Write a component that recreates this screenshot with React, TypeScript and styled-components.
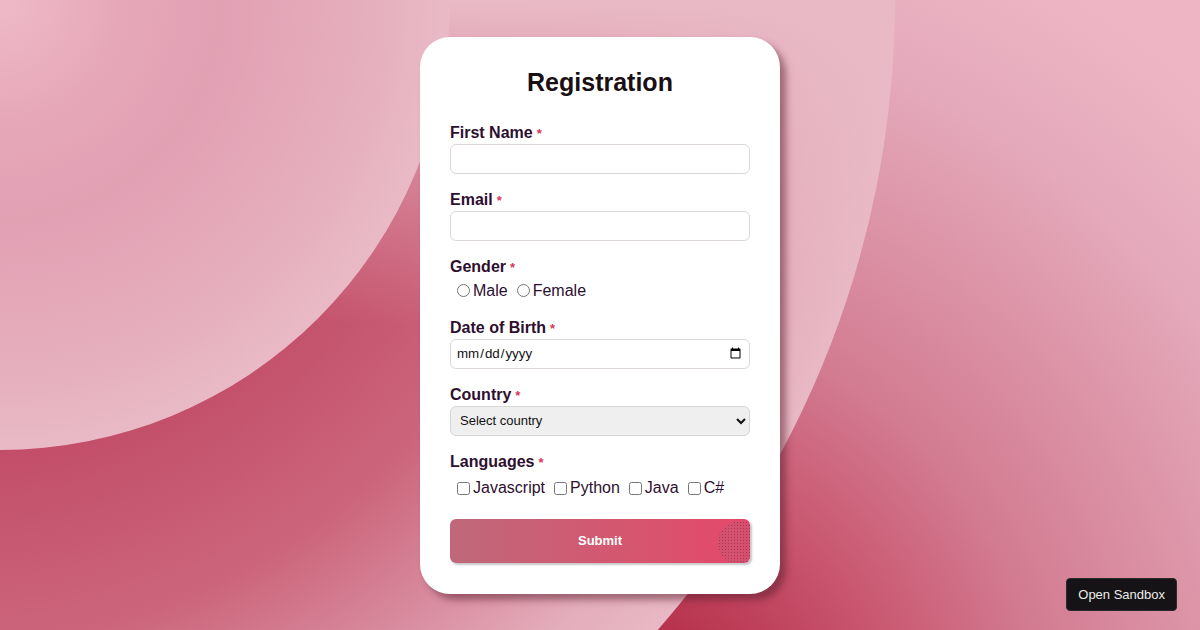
import React from "react";
import styled, { createGlobalStyle } from "styled-components";

const GlobalStyle = createGlobalStyle`
  body {
    margin: 0;
    font-family: "Liberation Sans", Arial, sans-serif;
  }
`;

// background: two rings spreading from the top left corner
const Page = styled.div`
  position: relative;
  width: 100%;
  height: 100vh;
  overflow: hidden;
  display: flex;
  align-items: center;
  justify-content: center;
  background: radial-gradient(
    circle at 600px 760px,
    #a82a45 0,
    #b8344e 150px,
    #c9566f 300px,
    #d27b91 450px,
    #dc93a6 600px,
    #e4aabb 750px,
    #eeb6c5 900px
  );

  &::before {
    content: "";
    position: absolute;
    left: -1015px;
    top: -955px;
    width: 1910px;
    height: 1910px;
    border-radius: 50%;
    background:
      linear-gradient(
        to bottom,
        rgba(233, 186, 198, 1) 955px,
        rgba(233, 186, 198, 0.6) 1080px,
        rgba(233, 186, 198, 0) 1280px
      ),
      radial-gradient(
        circle at 955px 955px,
        #c24d68 450px,
        #cc667c 650px,
        #d98da0 780px,
        #e4adbb 880px,
        #e8b8c4 955px
      );
  }

  &::after {
    content: "";
    position: absolute;
    left: -450px;
    top: -450px;
    width: 900px;
    height: 900px;
    border-radius: 50%;
    background: radial-gradient(
      circle at 450px 450px,
      #efbac7 0,
      #e6a8b9 120px,
      #e2a0b3 220px,
      #e6b0be 380px,
      #e9bac6 450px
    );
  }
`;

const Card = styled.form`
  position: relative;
  z-index: 1;
  width: 360px;
  box-sizing: border-box;
  padding: 30px 30px 31px;
  background: #ffffff;
  border-radius: 30px;
  box-shadow: 6px 6px 7px rgba(90, 30, 45, 0.5);
`;

const Title = styled.h2`
  margin: 0 0 27px;
  font-size: 25px;
  line-height: 30px;
  font-weight: 700;
  text-align: center;
  color: #1a1014;
`;

const Field = styled.div`
  display: flex;
  flex-direction: column;
  margin-bottom: 17px;
`;

const Label = styled.label`
  display: block;
  height: 18px;
  font-size: 16px;
  line-height: 18px;
  font-weight: 700;
  color: #2e0f30;
  margin-bottom: 2px;
`;

const Required = styled.span`
  color: #d6395c;
  font-size: 13px;
  line-height: 1;
  margin-left: 4px;
`;

const TextInput = styled.input`
  height: 30px;
  width: 100%;
  box-sizing: border-box;
  margin: 0;
  padding: 0 5px;
  border: 1px solid #dcd6da;
  border-radius: 6px;
  background: #fff;
  font-family: "Liberation Sans", Arial, sans-serif;
  font-size: 13.33px;
  color: #111;
`;

const Select = styled.select`
  height: 30px;
  width: 100%;
  box-sizing: border-box;
  margin: 0;
  padding: 0 5px;
  border: 1px solid #d6d6d6;
  border-radius: 6px;
  background-color: #efefef;
  font-family: "Liberation Sans", Arial, sans-serif;
  font-size: 13px;
  color: #111;
`;

const OptionRow = styled.div<{ $height: number }>`
  display: flex;
  align-items: center;
  gap: 9px;
  height: ${(p) => p.$height}px;
  margin-top: 2px;
  padding-left: 7px;
`;

const Option = styled.label`
  display: inline-flex;
  align-items: center;
  gap: 3px;
  font-size: 16px;
  color: #2e0f30;
`;

const Choice = styled.input`
  margin: 0;
  width: 13px;
  height: 13px;
`;

const SubmitButton = styled.button`
  position: relative;
  overflow: hidden;
  width: 100%;
  height: 44px;
  border: none;
  border-radius: 6px;
  background: linear-gradient(to right, #bf687a, #d5566f 60%, #e5486a);
  box-shadow: 2px 2px 2px rgba(0, 0, 0, 0.22);
  color: #ffffff;
  font-family: "Liberation Sans", Arial, sans-serif;
  font-size: 13px;
  font-weight: 700;
  cursor: pointer;

  &::after {
    content: "";
    position: absolute;
    top: 2px;
    right: -12px;
    width: 44px;
    height: 44px;
    border-radius: 50%;
    background-color: rgba(185, 95, 120, 0.35);
    background-image: radial-gradient(
      circle,
      rgba(120, 30, 60, 0.5) 0.6px,
      transparent 1px
    );
    background-size: 3px 3px;
  }
`;

const SandboxLink = styled.a`
  position: fixed;
  right: 23px;
  bottom: 19px;
  z-index: 2;
  display: flex;
  align-items: center;
  height: 33px;
  padding: 0 11px;
  box-sizing: border-box;
  background: #151315;
  border: 1px solid #2a2a2a;
  border-radius: 4px;
  color: #ececec;
  font-family: "Liberation Sans", Arial, sans-serif;
  font-size: 13px;
  text-decoration: none;
`;

const languages = ["Javascript", "Python", "Java", "C#"];

function App() {
  return (
    <Page>
      <GlobalStyle />
      <Card onSubmit={(e) => e.preventDefault()}>
        <Title>Registration</Title>

        <Field>
          <Label>
            First Name<Required>*</Required>
          </Label>
          <TextInput type="text" />
        </Field>

        <Field>
          <Label>
            Email<Required>*</Required>
          </Label>
          <TextInput type="email" />
        </Field>

        <Field>
          <Label>
            Gender<Required>*</Required>
          </Label>
          <OptionRow $height={22}>
            <Option>
              <Choice type="radio" name="gender" />
              Male
            </Option>
            <Option>
              <Choice type="radio" name="gender" />
              Female
            </Option>
          </OptionRow>
        </Field>

        <Field>
          <Label>
            Date of Birth<Required>*</Required>
          </Label>
          <TextInput type="date" />
        </Field>

        <Field>
          <Label>
            Country<Required>*</Required>
          </Label>
          <Select defaultValue="">
            <option value="">Select country</option>
            <option>India</option>
            <option>USA</option>
            <option>UK</option>
          </Select>
        </Field>

        <Field>
          <Label>
            Languages<Required>*</Required>
          </Label>
          <OptionRow $height={27}>
            {languages.map((lang) => (
              <Option key={lang}>
                <Choice type="checkbox" />
                {lang}
              </Option>
            ))}
          </OptionRow>
        </Field>

        <SubmitButton type="submit">Submit</SubmitButton>
      </Card>
      <SandboxLink href="#">Open Sandbox</SandboxLink>
    </Page>
  );
}

export default App;
